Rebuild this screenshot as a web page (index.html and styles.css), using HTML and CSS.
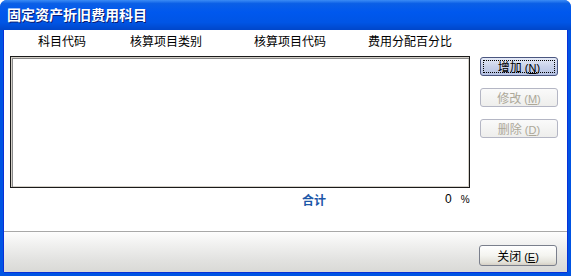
FILE: index.html
```html
<!DOCTYPE html>
<html lang="zh-CN">

<head>
    <meta charset="UTF-8">
    <title>固定资产折旧费用科目</title>
    <link rel="stylesheet" href="styles.css">
</head>

<body>
    <div class="window">
        <div class="titlebar">固定资产折旧费用科目</div>
        <div class="client">
            <div class="main">
                <div class="left">
                    <div class="cols">
                        <span class="col c1">科目代码</span>
                        <span class="col c2">核算项目类别</span>
                        <span class="col c3">核算项目代码</span>
                        <span class="col c4">费用分配百分比</span>
                    </div>
                    <div class="list"></div>
                    <div class="total">
                        <span class="total-label">合计</span>
                        <span class="total-num">0</span>
                        <span class="total-pct">%</span>
                    </div>
                </div>
                <div class="side">
                    <button class="btn btn-focus">增加<span class="key">(<u>N</u>)</span></button>
                    <button class="btn" disabled>修改<span class="key">(<u>M</u>)</span></button>
                    <button class="btn" disabled>删除<span class="key">(<u>D</u>)</span></button>
                </div>
            </div>
            <div class="bottom">
                <button class="btn">关闭<span class="key">(<u>E</u>)</span></button>
            </div>
        </div>
    </div>
</body>

</html>
```

FILE: styles.css
```css
* {
    box-sizing: border-box;
    margin: 0;
    padding: 0;
}

body {
    background-color: #fff;
    font-family: 'Liberation Sans', 'Noto Sans CJK SC', sans-serif;
    font-size: 12px;
    color: #000;
}

.window {
    width: 571px;
    height: 276px;
    display: flex;
    flex-direction: column;
    background-color: #0054e3;
    border-radius: 7px 7px 0 0;
    overflow: hidden;
}

.titlebar {
    height: 30px;
    flex: none;
    padding-left: 7px;
    line-height: 30px;
    font-size: 14px;
    font-weight: bold;
    color: #fff;
    text-shadow: 1px 1px 0 #0a1d74;
    background: linear-gradient(to bottom, #3b8cf5 0%, #0b5fe6 12%, #0058ee 40%, #0055e5 75%, #0046c9 100%);
}

.client {
    flex: 1;
    margin: 0 4px 4px 4px;
    background-color: #fff;
    display: flex;
    flex-direction: column;
    box-shadow: -1px 0 0 #0831d9, 1px 0 0 #0831d9, 0 1px 0 #0831d9;
}

.main {
    height: 201px;
    display: flex;
    padding-left: 6px;
}

.left {
    width: 460px;
}

.cols {
    height: 26px;
    display: flex;
    align-items: center;
    padding-left: 28px;
    padding-bottom: 6px;
}

.col {
    white-space: nowrap;
}

.c1 {
    width: 92px;
}

.c2 {
    width: 124px;
}

.c3 {
    width: 114px;
}

.list {
    height: 132px;
    background-color: #fff;
    border: 1px solid #1a1a1a;
    box-shadow: inset 1px 1px 0 #d4d0c8, inset 2px 2px 0 #8a8a8a, inset -1px -1px 0 #d4d0c8;
}

.total {
    height: 22px;
    display: flex;
    align-items: center;
}

.total-label {
    margin-left: 292px;
    font-weight: bold;
    color: #1c57a8;
}

.total-num {
    margin-left: 119px;
}

.total-pct {
    margin-left: 9px;
    font-size: 10px;
}

.side {
    padding-top: 27px;
    padding-left: 10px;
    display: flex;
    flex-direction: column;
    gap: 12px;
}

.btn {
    width: 78px;
    height: 19px;
    font-family: inherit;
    font-size: 12px;
    color: #000;
    border: 1px solid #4a5680;
    border-radius: 3px;
    background: linear-gradient(to bottom, #fff 0%, #f4f4f0 50%, #e3e2da 85%, #d6d0c5 100%);
    cursor: pointer;
}

.btn .key {
    font-size: 11px;
    margin-left: 3px;
}

.btn-focus {
    background: linear-gradient(to bottom, #e6ebf7 0%, #c9d2ea 50%, #b5c1e2 100%);
    outline: 1px dotted #000;
    outline-offset: -4px;
}

.btn:disabled {
    color: #aca899;
    border-color: #b4b6c4;
    background: linear-gradient(to bottom, #fafafa 0%, #eeeeec 100%);
    cursor: default;
}

.bottom {
    flex: 1;
    border-top: 1px solid #a8a8a8;
    background: linear-gradient(to bottom, #fdfdfd 0%, #f1f1f0 30%, #e2e2e0 70%, #d9d9d6 100%);
    display: flex;
    justify-content: flex-end;
    align-items: flex-start;
    padding-top: 13px;
    padding-right: 10px;
}

.bottom .btn {
    height: 21px;
    border-color: #7a7f8c;
}
```
